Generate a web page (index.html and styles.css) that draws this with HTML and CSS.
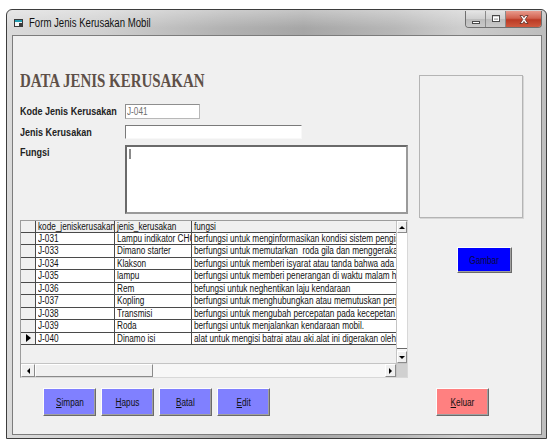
FILE: index.html
```html
<!DOCTYPE html>
<html lang="id">
<head>
<meta charset="utf-8">
<title>Form Jenis Kerusakan Mobil</title>
<link rel="stylesheet" href="styles.css">
</head>
<body>
<div class="window">
  <div class="titlebar">
    <svg class="app-icon" width="10" height="10" viewBox="0 0 10 10">
      <rect x="0.5" y="1.5" width="8" height="7" fill="#f4f4f4" stroke="#3a3a3a"/>
      <rect x="1" y="2" width="7" height="2" fill="#1f9bb0"/>
      <rect x="5" y="5" width="4" height="4" fill="#3c3c3c"/>
    </svg>
    <span class="caption"><span class="cn">Form Jenis Kerusakan Mobil</span></span>
    <div class="caption-buttons">
      <span class="cbtn cbtn-min">
        <svg width="10" height="6" viewBox="0 0 10 6"><rect x="1.5" y="2.5" width="7" height="2" fill="#fff" stroke="#4a4a4a"/></svg>
      </span>
      <span class="cbtn cbtn-max">
        <svg width="10" height="8" viewBox="0 0 10 8"><rect x="1.5" y="0.5" width="7" height="6" fill="none" stroke="#4a4a4a"/><rect x="2.5" y="2.5" width="5" height="3" fill="none" stroke="#fff"/></svg>
      </span>
      <span class="cbtn cbtn-close">
        <svg width="12" height="9" viewBox="0 0 12 9"><path d="M2 0.5h2.5l1.5 2 1.5-2h2.5l-2.8 4 2.8 4h-2.5l-1.5-2-1.5 2h-2.5l2.8-4z" fill="#fff" stroke="#5a2a22" stroke-width="0.8"/></svg>
      </span>
    </div>
  </div>

  <div class="client">
    <div class="main">
      <div class="form-col">
        <h1 class="heading">DATA JENIS KERUSAKAN</h1>

        <div class="fields">
          <label class="lbl"><span class="cn">Kode Jenis Kerusakan</span></label>
          <div class="txt txt-kode"><span class="cn">J-041</span></div>
          <label class="lbl"><span class="cn">Jenis Kerusakan</span></label>
          <div class="txt txt-jenis"></div>
          <label class="lbl"><span class="cn">Fungsi</span></label>
          <div class="txt txt-fungsi"><span class="caret"></span></div>
        </div>

        <div class="datagrid">
          <div class="dg-view">
            <div class="dg-row dg-head">
              <div class="dg-c dg-rh"></div>
              <div class="dg-c dg-c1"><span class="cn">kode_jeniskerusakan</span></div>
              <div class="dg-c dg-c2"><span class="cn">jenis_kerusakan</span></div>
              <div class="dg-c dg-c3"><span class="cn">fungsi</span></div>
            </div>
            <div class="dg-row">
              <div class="dg-c dg-rh"></div>
              <div class="dg-c dg-c1"><span class="cn">J-031</span></div>
              <div class="dg-c dg-c2"><span class="cn">Lampu indikator CHG</span></div>
              <div class="dg-c dg-c3"><span class="cn">berfungsi untuk menginformasikan kondisi sistem pengisian</span></div>
            </div>
            <div class="dg-row">
              <div class="dg-c dg-rh"></div>
              <div class="dg-c dg-c1"><span class="cn">J-033</span></div>
              <div class="dg-c dg-c2"><span class="cn">Dimano starter</span></div>
              <div class="dg-c dg-c3"><span class="cn">berfungsi untuk memutarkan&nbsp; roda gila dan menggerakan mesin</span></div>
            </div>
            <div class="dg-row">
              <div class="dg-c dg-rh"></div>
              <div class="dg-c dg-c1"><span class="cn">J-034</span></div>
              <div class="dg-c dg-c2"><span class="cn">Klakson</span></div>
              <div class="dg-c dg-c3"><span class="cn">berfungsi untuk memberi isyarat atau tanda bahwa ada mobil</span></div>
            </div>
            <div class="dg-row">
              <div class="dg-c dg-rh"></div>
              <div class="dg-c dg-c1"><span class="cn">J-035</span></div>
              <div class="dg-c dg-c2"><span class="cn">lampu</span></div>
              <div class="dg-c dg-c3"><span class="cn">berfungsi untuk memberi penerangan di waktu malam hari</span></div>
            </div>
            <div class="dg-row">
              <div class="dg-c dg-rh"></div>
              <div class="dg-c dg-c1"><span class="cn">J-036</span></div>
              <div class="dg-c dg-c2"><span class="cn">Rem</span></div>
              <div class="dg-c dg-c3"><span class="cn">befungsi untuk neghentikan laju kendaraan</span></div>
            </div>
            <div class="dg-row">
              <div class="dg-c dg-rh"></div>
              <div class="dg-c dg-c1"><span class="cn">J-037</span></div>
              <div class="dg-c dg-c2"><span class="cn">Kopling</span></div>
              <div class="dg-c dg-c3"><span class="cn">berfungsi untuk menghubungkan atau memutuskan perputaran</span></div>
            </div>
            <div class="dg-row">
              <div class="dg-c dg-rh"></div>
              <div class="dg-c dg-c1"><span class="cn">J-038</span></div>
              <div class="dg-c dg-c2"><span class="cn">Transmisi</span></div>
              <div class="dg-c dg-c3"><span class="cn">berfungsi untuk mengubah percepatan pada kecepetan mesin</span></div>
            </div>
            <div class="dg-row">
              <div class="dg-c dg-rh"></div>
              <div class="dg-c dg-c1"><span class="cn">J-039</span></div>
              <div class="dg-c dg-c2"><span class="cn">Roda</span></div>
              <div class="dg-c dg-c3"><span class="cn">berfungsi untuk menjalankan kendaraan mobil.</span></div>
            </div>
            <div class="dg-row dg-current">
              <div class="dg-c dg-rh"><span class="row-pointer"></span></div>
              <div class="dg-c dg-c1"><span class="cn">J-040</span></div>
              <div class="dg-c dg-c2"><span class="cn">Dinamo isi</span></div>
              <div class="dg-c dg-c3"><span class="cn">alat untuk mengisi batrai atau aki.alat ini digerakan oleh mesin</span></div>
            </div>
          </div>
          <div class="vscroll">
            <span class="sb-btn sb-up"></span>
            <span class="sb-thumb-v"></span>
            <span class="sb-btn sb-down"></span>
          </div>
          <div class="hscroll">
            <span class="sb-btn sb-left"></span>
            <span class="sb-thumb-h"></span>
            <span class="sb-track"></span>
            <span class="sb-btn sb-right"></span>
          </div>
          <div class="sb-corner"></div>
        </div>
      </div>

      <div class="side-col">
        <div class="picture"></div>
        <button class="btn btn-gambar"><span class="cn">Gambar</span></button>
      </div>
    </div>

    <div class="actions">
      <button class="btn btn-blue"><span class="cn"><u>S</u>impan</span></button>
      <button class="btn btn-blue"><span class="cn"><u>H</u>apus</span></button>
      <button class="btn btn-blue"><span class="cn"><u>B</u>atal</span></button>
      <button class="btn btn-blue"><span class="cn"><u>E</u>dit</span></button>
      <button class="btn btn-red"><span class="cn"><u>K</u>eluar</span></button>
    </div>
  </div>
</div>
</body>
</html>
```

FILE: styles.css
```css
* {
  box-sizing: border-box;
}

body {
  margin: 0;
  width: 548px;
  height: 439px;
  overflow: hidden;
  background: #ffffff;
  font-family: "Liberation Sans", Arial, sans-serif;
  color: #000;
}

/* narrow system-font look: glyphs drawn condensed */
.cn {
  display: inline-block;
  white-space: nowrap;
  transform: scaleX(0.82);
  transform-origin: 0 50%;
}

/* ---- window frame ---- */
.window {
  margin: 9px 0 0 6px;
  width: 541px;
  height: 430px;
  border: 1px solid #3d3d3d;
  border-radius: 6px 6px 0 0;
  padding: 0 4px 3px 5px;
  display: flex;
  flex-direction: column;
  background:
    linear-gradient(180deg, rgba(255,255,255,0.35) 0, rgba(255,255,255,0) 18px),
    linear-gradient(90deg, #dadada 0%, #cfcfcf 18%, #b2b2b2 40%, #a6a6a6 55%, #b7b7b7 72%, #cdcdcd 84%, #bdbdbd 100%);
}

.titlebar {
  height: 25px;
  flex: none;
  display: flex;
  align-items: center;
  padding-left: 2px;
}

.app-icon {
  flex: none;
  margin-top: 1px;
}

.caption {
  margin-left: 5px;
  font-size: 12px;
  color: #111;
  margin-top: 1px;
}

.caption .cn {
  transform: scaleX(0.8);
}

.caption-buttons {
  margin-left: auto;
  align-self: flex-start;
  display: flex;
  height: 17px;
  margin-top: 1px;
  border: 1px solid #6f6f6f;
  border-top: 0;
  border-radius: 0 0 4px 4px;
  overflow: hidden;
}

.cbtn {
  display: flex;
  align-items: center;
  justify-content: center;
  height: 100%;
}

.cbtn-min,
.cbtn-max {
  width: 20px;
  background: linear-gradient(180deg, #e4e4e4 0%, #cfcfcf 50%, #bcbcbc 51%, #c9c9c9 100%);
  border-right: 1px solid #8a8a8a;
}

.cbtn-min svg {
  margin-top: 5px;
}

.cbtn-close {
  width: 35px;
  background: linear-gradient(180deg, #e89a8c 0%, #d2624f 45%, #bb3a25 55%, #cf5a3f 100%);
}

/* ---- client area ---- */
.client {
  flex: 1;
  background: #f0f0f0;
  border: 1px solid #7c7c7c;
  display: flex;
  flex-direction: column;
}

.main {
  display: flex;
  padding-left: 7px;
}

.form-col {
  width: 388px;
  flex: none;
}

.heading {
  margin: 0;
  padding-top: 35px;
  height: 55px;
  font-family: "Liberation Serif", "Times New Roman", serif;
  font-size: 18px;
  line-height: 20px;
  font-weight: bold;
  color: #5e5048;
  white-space: nowrap;
  transform: scaleX(0.83);
  transform-origin: left top;
}

.fields {
  margin-top: 13px;
  display: grid;
  grid-template-columns: 105px auto;
  grid-template-rows: 15px 14px 69px;
  row-gap: 6px;
  justify-items: start;
}

.lbl {
  font-size: 11px;
  font-weight: bold;
  color: #222;
  line-height: 13px;
  padding-top: 1px;
}

.txt {
  background: #fff;
  font-size: 10px;
  line-height: 12px;
}

.txt-kode {
  width: 75px;
  height: 15px;
  border: 1px solid #8e8e8e;
  border-right-color: #b8b8b8;
  border-bottom-color: #b8b8b8;
  color: #707070;
  padding: 1px 0 0 1px;
}

.txt-jenis {
  width: 177px;
  height: 14px;
  border-top: 1px solid #7a7a7a;
  border-left: 1px solid #7a7a7a;
  border-right: 1px solid #f8f8f8;
  border-bottom: 1px solid #f8f8f8;
}

.txt-fungsi {
  width: 283px;
  height: 69px;
  border: 2px solid #9a9a9a;
  border-top-color: #6a6a6a;
  border-left-color: #6a6a6a;
  padding: 2px 0 0 2px;
}

.caret {
  display: block;
  width: 2px;
  height: 10px;
  background: #8a8a8a;
}

/* ---- data grid ---- */
.datagrid {
  margin-top: 6px;
  width: 388px;
  height: 158px;
  border: 1px solid #9c9c9c;
  border-right-color: #d8d8d8;
  border-bottom-color: #d8d8d8;
  display: grid;
  grid-template-columns: 375px 11px;
  grid-template-rows: 142px 14px;
  background: #f0f0f0;
}

.dg-view {
  overflow: hidden;
  background: #f0f0f0;
}

.dg-row {
  display: flex;
  height: 12.45px;
  border-bottom: 1px solid #4a4a4a;
  font-size: 10px;
  line-height: 11px;
  white-space: nowrap;
}

.dg-head {
  height: 12px;
  background: #f0f0f0;
}

.dg-c {
  flex: none;
  overflow: hidden;
  border-right: 1px solid #4a4a4a;
  padding-left: 2px;
  background: #fff;
  color: #111;
}

.dg-head .dg-c,
.dg-rh {
  background: #f0f0f0;
}

.dg-rh {
  width: 15px;
  padding-left: 0;
  display: flex;
  align-items: center;
  justify-content: center;
}

.dg-c1 { width: 79px; }
.dg-c2 { width: 77px; }
.dg-c3 { width: 260px; border-right: 0; }

.row-pointer {
  width: 0;
  height: 0;
  border-top: 4px solid transparent;
  border-bottom: 4px solid transparent;
  border-left: 5px solid #000;
}

/* scroll bars */
.vscroll {
  display: flex;
  flex-direction: column;
  background: #f7f7f7;
  border-left: 1px solid #c4c4c4;
}

.hscroll {
  display: flex;
  background: #f7f7f7;
  border-top: 1px solid #c4c4c4;
}

.sb-btn {
  flex: none;
  display: flex;
  align-items: center;
  justify-content: center;
  background: #f0f0f0;
  border: 1px solid;
  border-color: #fff #8a8a8a #8a8a8a #fff;
}

.vscroll .sb-btn { height: 12px; }
.hscroll .sb-btn { width: 14px; }
.hscroll .sb-right { width: 11px; }

.sb-up::before,
.sb-down::before,
.sb-left::before,
.sb-right::before {
  content: "";
  width: 0;
  height: 0;
}

.sb-up::before {
  border-left: 3px solid transparent;
  border-right: 3px solid transparent;
  border-bottom: 3px solid #000;
}

.sb-down::before {
  border-left: 3px solid transparent;
  border-right: 3px solid transparent;
  border-top: 3px solid #000;
}

.sb-left::before {
  border-top: 3px solid transparent;
  border-bottom: 3px solid transparent;
  border-right: 3px solid #000;
}

.sb-right::before {
  border-top: 3px solid transparent;
  border-bottom: 3px solid transparent;
  border-left: 3px solid #000;
}

.sb-thumb-v {
  flex: 1;
  margin-bottom: 2px;
  background: #fff;
  border-bottom: 1px solid #6a6a6a;
}

.sb-thumb-h {
  flex: none;
  width: 118px;
  background: #f0f0f0;
  border: 1px solid;
  border-color: #fff #8a8a8a #8a8a8a #fff;
}

.sb-track {
  flex: 1;
}

.sb-corner {
  background: #d0d0d0;
  border-top: 1px solid #c4c4c4;
  border-left: 1px solid #c4c4c4;
}

/* ---- side column ---- */
.side-col {
  margin-left: 11px;
  display: flex;
  flex-direction: column;
}

.picture {
  margin-top: 39px;
  width: 104px;
  height: 143px;
  border: 1px solid #b4b4b4;
  box-shadow: 1px 1px 0 #d6d6d6;
}

/* ---- buttons ---- */
.btn {
  font-family: "Liberation Sans", Arial, sans-serif;
  font-size: 10px;
  color: #111;
  height: 28px;
  width: 53px;
  padding: 0;
  border: 1px solid;
  border-color: #fdfdfd #6a6a6a #6a6a6a #fdfdfd;
  box-shadow: inset -1px -1px 0 #a0a0a0;
}

.btn .cn {
  transform-origin: 50% 50%;
}

.btn u {
  text-underline-offset: 1px;
}

.btn-gambar {
  margin: 29px 0 0 38px;
  width: 55px;
  height: 26px;
  background: #0000ff;
  color: #0a0a40;
}

.actions {
  margin-top: 10px;
  padding-left: 30px;
  padding-right: 52px;
  display: flex;
  gap: 5px;
}

.btn-blue {
  background: #8080ff;
}

.btn-red {
  margin-left: auto;
  background: #ff8080;
}
```
